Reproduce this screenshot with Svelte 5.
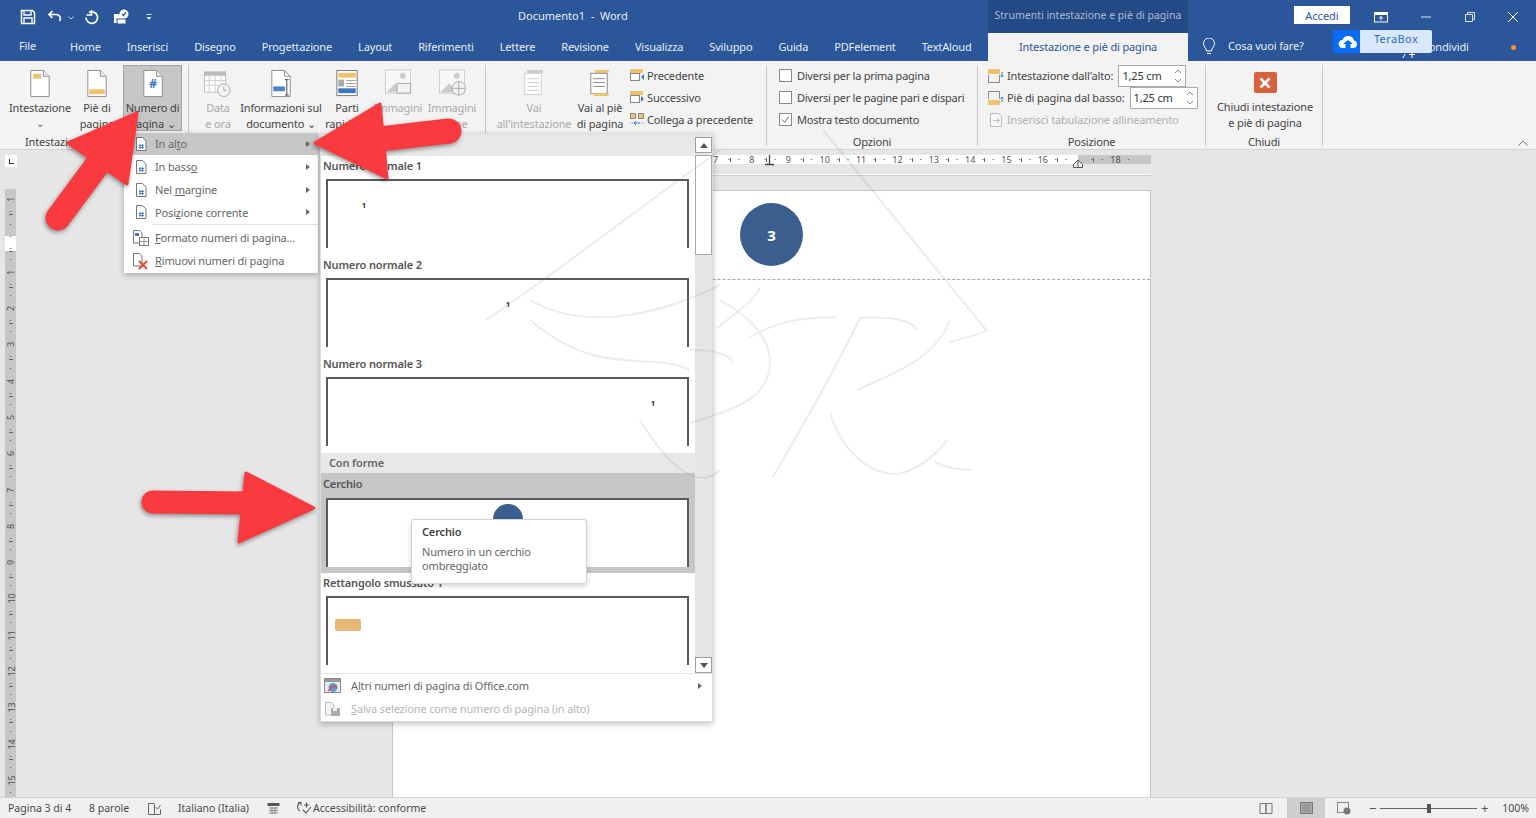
<script>
  const tabs = ['Home', 'Inserisci', 'Disegno', 'Progettazione', 'Layout', 'Riferimenti', 'Lettere', 'Revisione', 'Visualizza', 'Sviluppo', 'Guida', 'PDFelement', 'TextAloud'];

  const menu = [
    { pre: 'In al', key: 't', post: 'o', arrow: true, hot: true },
    { pre: 'In bass', key: 'o', post: '', arrow: true },
    { pre: 'Nel ', key: 'm', post: 'argine', arrow: true },
    { pre: 'Posi', key: 'z', post: 'ione corrente', arrow: true, sep: true },
    { pre: '', key: 'F', post: 'ormato numeri di pagina...', icon: 'format' },
    { pre: '', key: 'R', post: 'imuovi numeri di pagina', icon: 'remove' }
  ];

  const hCells = [7, 8, 9, 10, 11, 12, 13, 14, 15, 16, 17, 18];
  const vCells = [1, 0, 1, 2, 3, 4, 5, 6, 7, 8, 9, 10, 11, 12, 13, 14, 15];

  const normali = [
    { nome: 'Numero normale 1', pos: 'left' },
    { nome: 'Numero normale 2', pos: 'mid' },
    { nome: 'Numero normale 3', pos: 'right' }
  ];
</script>

{#snippet doc(band, num)}
  <svg class="ic-big" viewBox="0 0 24 30" width="24" height="30">
    <path d="M2.500 1.500h13l6 6v21h-19z" fill="#fff" stroke="#8c8c8c" />
    <path d="M15.500 1.500v6h6" fill="#f3f3f3" stroke="#8c8c8c" />
    {#if band === 'top'}<rect x="5" y="5" width="8" height="5" fill="#eec36f" />{/if}
    {#if band === 'bottom'}<rect x="4" y="21" width="16" height="5" fill="#eec36f" />{/if}
    {#if num}<text x="12" y="20" text-anchor="middle" class="hash">#</text>{/if}
  </svg>
{/snippet}

{#snippet miniDoc()}
  <svg viewBox="0 0 14 16" width="14" height="16">
    <path d="M2.500 1.500h6l3.500 3.500v9.500h-9.500z" fill="#fff" stroke="#777" />
    <path d="M5 9.500h5M5 11.500h5M6 8v5M8.500 8v5" stroke="#3b78c2" fill="none" stroke-width=".9" />
  </svg>
{/snippet}

{#snippet check(on)}
  <span class="chk">
    {#if on}
      <svg viewBox="0 0 12 12" width="12" height="12"><path d="M2.500 6l2.500 3 4.500-6" fill="none" stroke="#555" /></svg>
    {/if}
  </span>
{/snippet}

{#snippet spin()}
  <span class="spin">
    <svg viewBox="0 0 8 16" width="8" height="16"><path d="M1 5l3-3 3 3M1 11l3 3 3-3" fill="none" stroke="#888" /></svg>
  </span>
{/snippet}

<div class="app">
  <header class="titlebar">
    <div class="qat">
      <svg viewBox="0 0 16 16" width="16" height="16"><path d="M1.500 1.500h11l2 2v11h-13z" fill="none" stroke="#fff" stroke-width="1.500" /><path d="M4 2v4h7V2M4 14V9h8v5" fill="none" stroke="#fff" stroke-width="1.300" /></svg>
      <svg viewBox="0 0 16 16" width="16" height="16"><path d="M5.500 2L2 5.500 5.500 9M2.500 5.500h7a4 4 0 0 1 3 6.500" fill="none" stroke="#fff" stroke-width="1.700" /></svg>
      <svg class="chev" viewBox="0 0 6 4" width="6" height="4"><path d="M.5.500L3 3l2.500-2.500" fill="none" stroke="#cdd8e8" /></svg>
      <svg class="redo" viewBox="0 0 16 16" width="16" height="16"><path d="M5 3.500a5.800 5.800 0 1 1-3 5M7.500 1v5h-5" fill="none" stroke="#fff" stroke-width="1.700" /></svg>
      <svg class="touch" viewBox="0 0 18 16" width="18" height="16"><rect x="2" y="5" width="9" height="9" fill="#fff" /><rect x="5" y="10" width="9" height="5" fill="#fff" stroke="#2b579a" /><circle cx="12" cy="5" r="4.500" fill="#fff" /><path d="M10 5l1.500 1.500L14 3.500" stroke="#2b579a" fill="none" stroke-width="1.200" /></svg>
      <svg class="custom" viewBox="0 0 8 8" width="8" height="8"><path d="M1.500 1.500h5" stroke="#dfe6f0" /><path d="M1.500 4h5L4 7z" fill="#dfe6f0" /></svg>
    </div>
    <div class="doc-title">Documento1&nbsp; -&nbsp; Word</div>
    <div class="ctx-title">Strumenti intestazione e piè di pagina</div>
    <div class="win">
      <button class="accedi">Accedi</button>
      <svg class="w-ribbon" viewBox="0 0 14 12" width="14" height="12"><rect x=".5" y="1.500" width="13" height="9.500" fill="none" stroke="#fff" /><path d="M1 2h12v2H1z" fill="#fff" /><path d="M7 9.500V5.500M5 7.500l2-2 2 2" stroke="#fff" fill="none" /></svg>
      <svg class="w-min" viewBox="0 0 10 2" width="10" height="2"><path d="M0 1h10" stroke="#dfe6f0" /></svg>
      <svg class="w-max" viewBox="0 0 10 10" width="10" height="10"><path d="M.5 2.500h7v7h-7zM2.500 2.500v-2h7v7h-2" fill="none" stroke="#dfe6f0" /></svg>
      <svg class="w-close" viewBox="0 0 10 10" width="10" height="10"><path d="M0 0l10 10M10 0L0 10" stroke="#fff" /></svg>
    </div>
  </header>

  <nav class="tabbar">
    <div class="tabs">
      <span class="tab-file">File</span>
      {#each tabs as t}
        <span class="tab">{t}</span>
      {/each}
    </div>
    <div class="tab-active">Intestazione e piè di pagina</div>
    <div class="tab-right">
      <svg class="bulb" viewBox="0 0 14 18" width="14" height="18"><path d="M4.500 13c0-3-3-4-3-7.500a5.500 5.500 0 0 1 11 0c0 3.500-3 4.500-3 7.500zM5 15.500h4" fill="none" stroke="#fff" /></svg>
      <span class="cosa">Cosa vuoi fare?</span>
      <svg class="person" viewBox="0 0 14 8" width="14" height="8"><path d="M1 8l2-4M10 1v7M7 4.500h6" stroke="#fff" fill="none" /></svg>
      <span class="cond">Condividi</span>
      <span class="dot"></span>
    </div>
  </nav>

  <section class="ribbon">
    <div class="group" style="width:189px">
      <div class="g-body g1">
        <div class="big w70">{@render doc('top')}<span>Intestazione</span><i class="c">⌄</i></div>
        <div class="big w44">{@render doc('bottom')}<span>Piè di<br />pagina</span></div>
        <div class="big w59 on">{@render doc('', true)}<span>Numero di<br />pagina ⌄</span></div>
      </div>
      <div class="g-label">Intestazione e piè di pagina</div>
    </div>

    <div class="group" style="width:297px">
      <div class="g-body g2">
        <div class="big w40 off">
          <svg class="ic-big" viewBox="0 0 30 30" width="30" height="30"><rect x="1" y="3" width="22" height="21" fill="#fff" stroke="#bbb" /><rect x="1" y="3" width="22" height="4" fill="#bbb" /><path d="M1 12h22M1 17h22M6 7v17M12 7v17M18 7v17" stroke="#ccc" /><circle cx="21" cy="22" r="6.500" fill="#f3f3f3" stroke="#aaa" /><path d="M21 18v4h3" stroke="#aaa" fill="none" /></svg>
          <span>Data<br />e ora</span>
        </div>
        <div class="big w86">
          <svg class="ic-big" viewBox="0 0 24 30" width="24" height="30"><path d="M2.500 1.500h13l6 6v21h-19z" fill="#fff" stroke="#8c8c8c" /><path d="M15.500 1.500v6h6" fill="none" stroke="#8c8c8c" /><rect x="4" y="18" width="12" height="5" fill="#4a86c8" /><path d="M18 11v16M16 11h4M16 27h4" stroke="#444" fill="none" /></svg>
          <span>Informazioni sul<br />documento ⌄</span>
        </div>
        <div class="big w46">
          <svg class="ic-big" viewBox="0 0 24 30" width="24" height="30"><rect x="1.500" y="1.500" width="21" height="26" fill="#fff" stroke="#777" /><rect x="3" y="4" width="18" height="5" fill="#eec36f" /><rect x="3" y="11" width="6" height="7" fill="#aaa" /><path d="M11 12h10M11 15h10M11 18h10" stroke="#999" /><rect x="3" y="20" width="18" height="5" fill="#3b78c2" /></svg>
          <span>Parti<br />rapide ⌄</span>
        </div>
        <div class="big w56 off">
          <svg class="ic-big" viewBox="0 0 30 30" width="30" height="30"><rect x="2" y="1" width="26" height="24" fill="#f7f7f7" stroke="#ccc" /><circle cx="20" cy="7" r="3" fill="#ccc" /><path d="M3 24l9-9 9 9z" fill="#ccc" /><rect x="14" y="15" width="14" height="10" fill="#f3f3f3" stroke="#aaa" /></svg>
          <span>Immagini<br />&nbsp;</span>
        </div>
        <div class="big w52 off">
          <svg class="ic-big" viewBox="0 0 30 30" width="30" height="30"><rect x="2" y="1" width="26" height="24" fill="#f7f7f7" stroke="#ccc" /><circle cx="20" cy="7" r="3" fill="#ccc" /><path d="M3 24l9-9 9 9z" fill="#ccc" /><circle cx="22" cy="20" r="7" fill="#f3f3f3" stroke="#aaa" /><path d="M15 20h14M22 13v14" stroke="#aaa" /></svg>
          <span>Immagini<br />online</span>
        </div>
      </div>
      <div class="g-label"></div>
    </div>

    <div class="group" style="width:281px">
      <div class="g-body g3">
        <div class="big w76 off">
          <svg class="ic-big" viewBox="0 0 24 30" width="24" height="30"><rect x="5" y="1" width="16" height="3" fill="#ccc" /><rect x="2.500" y="4.500" width="17" height="22" fill="#fff" stroke="#ccc" /><path d="M5 10h12M5 14h12M5 18h12M5 22h12" stroke="#ccc" /></svg>
          <span>Vai<br />all'intestazione</span>
        </div>
        <div class="big w56">
          <svg class="ic-big" viewBox="0 0 24 30" width="24" height="30"><rect x="7" y="1" width="14" height="3" fill="#eec36f" /><rect x="2.500" y="4.500" width="17" height="21" fill="#fff" stroke="#888" /><path d="M5 10h12M5 14h12M5 18h12" stroke="#888" /><rect x="5" y="25" width="16" height="3" fill="#eec36f" /></svg>
          <span>Vai al piè<br />di pagina</span>
        </div>
        <div class="small-col">
          <div class="small">
            <svg viewBox="0 0 16 14" width="16" height="14"><rect x="1" y="1" width="13" height="4" fill="#eec36f" /><rect x="1.500" y="5.500" width="9" height="7" fill="#fff" stroke="#888" /><path d="M15 6l-3 3 3 3z" fill="#3b78c2" /></svg>
            <span>Precedente</span>
          </div>
          <div class="small">
            <svg viewBox="0 0 16 14" width="16" height="14"><rect x="1" y="1" width="13" height="4" fill="#eec36f" /><rect x="1.500" y="5.500" width="9" height="7" fill="#fff" stroke="#888" /><path d="M12 6l3 3-3 3z" fill="#3b78c2" /></svg>
            <span>Successivo</span>
          </div>
          <div class="small">
            <svg viewBox="0 0 16 14" width="16" height="14"><rect x="1.500" y="1.500" width="5" height="5" fill="#eec36f" stroke="#888" /><rect x="9.500" y="1.500" width="5" height="5" fill="#eec36f" stroke="#888" /><path d="M1 11h3M12 11h3" stroke="#888" stroke-dasharray="1 1" /><path d="M5 11h6M7 9l-2 2 2 2" stroke="#3b78c2" fill="none" /></svg>
            <span>Collega a precedente</span>
          </div>
        </div>
      </div>
      <div class="g-label"></div>
    </div>

    <div class="group" style="width:211px">
      <div class="g-body g4">
        <div class="small">{@render check(false)}<span>Diversi per la prima pagina</span></div>
        <div class="small">{@render check(false)}<span>Diversi per le pagine pari e dispari</span></div>
        <div class="small">{@render check(true)}<span>Mostra testo documento</span></div>
      </div>
      <div class="g-label">Opzioni</div>
    </div>

    <div class="group" style="width:228px">
      <div class="g-body g5">
        <div class="pos">
          <svg viewBox="0 0 16 16" width="16" height="16"><rect x="0" y="1" width="12" height="5" fill="#eec36f" /><path d="M.5 7v7.500h11V7" fill="none" stroke="#888" /><path d="M14 4v5M12.500 7.500L14 9l1.500-1.500" fill="none" stroke="#3b78c2" /></svg>
          <span>Intestazione dall'alto:</span>
          <div class="field"><em>1,25 cm</em>{@render spin()}</div>
        </div>
        <div class="pos">
          <svg viewBox="0 0 16 16" width="16" height="16"><path d="M.5 9V1.500h11V9" fill="none" stroke="#888" /><rect x="0" y="10" width="12" height="5" fill="#eec36f" /><path d="M14 12V7M12.500 8.500L14 7l1.500 1.500" fill="none" stroke="#3b78c2" /></svg>
          <span>Piè di pagina dal basso:</span>
          <div class="field"><em>1,25 cm</em>{@render spin()}</div>
        </div>
        <div class="pos dis">
          <svg viewBox="0 0 16 16" width="16" height="16"><path d="M2.500 1.500h8l3 3v10h-11z" fill="#f8f8f8" stroke="#bbb" /><path d="M5 8.500h6M9 6l2.500 2.500L9 11" stroke="#bbb" fill="none" /></svg>
          <span>Inserisci tabulazione allineamento</span>
        </div>
      </div>
      <div class="g-label">Posizione</div>
    </div>

    <div class="group" style="width:117px">
      <div class="g-body g6">
        <div class="big w117">
          <span class="close-ic">
            <svg viewBox="0 0 12 12" width="12" height="12"><path d="M1.500 1.500l9 9M10.500 1.500l-9 9" stroke="#fff" stroke-width="2.600" /></svg>
          </span>
          <span>Chiudi intestazione<br />e piè di pagina</span>
        </div>
      </div>
      <div class="g-label">Chiudi</div>
    </div>

    <svg class="collapse" viewBox="0 0 10 6" width="10" height="6"><path d="M.5 5.500L5 1l4.500 4.500" fill="none" stroke="#777" /></svg>
  </section>

  <main class="workspace">
    <div class="left-col">
      <div class="tab-sel"><span></span></div>
      <div class="vruler">
        <div class="v-white"></div>
        <div class="v-cells">
          {#each vCells as n, i}
            <div class="v-cell">
              <b class="tk"></b><i>·</i>
              {#if i !== 1}<span>{n}</span>{:else}<i>·</i>{/if}
              <i>·</i>
            </div>
          {/each}
        </div>
      </div>
    </div>
    <div class="page-col">
      <div class="hruler">
        <div class="h-cells">
          {#each hCells as n}
            <div class="h-cell">
              <b class="tk"></b><i>·</i>
              {#if n !== 17}<span>{n}</span>{:else}<span>&nbsp;</span>{/if}
              <i>·</i>
            </div>
          {/each}
        </div>
        <svg class="tab-stop" viewBox="0 0 9 12" width="9" height="12"><path d="M4.500 1v9M0 10.500h9" stroke="#444" fill="none" stroke-width="1.300" /></svg>
        <svg class="margin-stop" viewBox="0 0 10 9" width="10" height="9"><path d="M.5 8.500v-3L5 1l4.500 4.500v3z" fill="#f3f3f3" stroke="#555" /><path d="M5 1v7.500" stroke="#555" /></svg>
      </div>
      <div class="h-line"></div>
      <div class="page">
        <div class="page-header">
          <div class="bubble">3</div>
        </div>
      </div>
    </div>
    <div class="right-col"></div>
  </main>

  <footer class="status">
    <span class="st w81">Pagina 3 di 4</span>
    <span class="st w58">8 parole</span>
    <svg class="st-book" viewBox="0 0 15 13" width="15" height="13"><path d="M7.500 2.500v10h-6v-11h6M7.500 2.500v10h6v-5M8.500 5l2 2 3-4" fill="none" stroke="#666" /></svg>
    <span class="st lang">Italiano (Italia)</span>
    <svg class="st-cal" viewBox="0 0 13 13" width="13" height="13"><rect x=".5" y="1" width="12" height="3" fill="#555" /><path d="M2 6h9M2 8.500h9M2 11h9M5 5v7M8 5v7" stroke="#888" /></svg>
    <svg class="st-acc" viewBox="0 0 17 14" width="17" height="14"><path d="M5 1a5 5 0 0 0-1 9M2 1.500h3v3M13 4h-5M10.500 1.500v5M7 9l3 3 5-6" fill="none" stroke="#555" stroke-width="1.100" /></svg>
    <span class="st">Accessibilità: conforme</span>
    <div class="st-right">
      <svg viewBox="0 0 14 12" width="14" height="12"><path d="M7 2v9.500H1V1.500h6M7 2v9.500h6V1.500H7" fill="#eee" stroke="#777" /></svg>
      <span class="view-on"><svg viewBox="0 0 13 12" width="13" height="12"><rect x=".5" y=".5" width="12" height="11" fill="#aaa" stroke="#777" /><path d="M2 3h9M2 5h9M2 7h9M2 9h9" stroke="#888" /></svg></span>
      <svg class="web" viewBox="0 0 14 13" width="14" height="13"><rect x=".5" y=".5" width="11" height="10" fill="#eee" stroke="#888" /><circle cx="10" cy="9" r="3.500" fill="#777" /></svg>
      <span class="z-btn minus">−</span>
      <div class="slider"><span class="thumb"></span></div>
      <span class="z-btn plus">+</span>
      <span class="zoom">100%</span>
    </div>
  </footer>

  <!-- menu numero di pagina -->
  <div class="menu">
    {#each menu as m}
      <div class="m-item" class:hot={m.hot} class:sep={m.sep}>
        <span class="m-ic">
          {#if m.icon === 'format'}
            <svg viewBox="0 0 18 18" width="18" height="18"><path d="M1.500 1.500h6l2.500 2.500v10H1.500z" fill="#fff" stroke="#777" /><rect x="3" y="4" width="4" height="3" fill="#3b78c2" /><rect x="7.500" y="8.500" width="9" height="8" fill="#fff" stroke="#777" /><path d="M7.500 12.500h9M12 8.500v8" stroke="#999" /></svg>
          {:else if m.icon === 'remove'}
            <svg viewBox="0 0 18 18" width="18" height="18"><path d="M1.500 1.500h6l2.500 2.500v10H1.500z" fill="#fff" stroke="#777" /><path d="M7 9l8 8M15 9l-8 8" stroke="#e04a3a" stroke-width="2" /></svg>
          {:else}
            {@render miniDoc()}
          {/if}
        </span>
        <span class="m-txt">{m.pre}<u>{m.key}</u>{m.post}</span>
        {#if m.arrow}<span class="m-arr"></span>{/if}
      </div>
    {/each}
  </div>

  <!-- galleria -->
  <div class="gallery">
    <div class="g-main">
      <div class="g-list">
        <div class="sect first">Semplice</div>
        {#each normali as it}
          <div class="g-item">
            <div class="g-name">{it.nome}</div>
            <div class="g-prev {it.pos}"><span class="n1">1</span></div>
          </div>
        {/each}
        <div class="sect">Con forme</div>
        <div class="g-item hot">
          <div class="g-name">Cerchio</div>
          <div class="g-prev center"><span class="mini-circle"></span></div>
        </div>
        <div class="g-item">
          <div class="g-name">Rettangolo smussato 1</div>
          <div class="g-prev start"><span class="mini-rect"></span></div>
        </div>
      </div>
      <div class="scroll">
        <div class="s-btn"><span class="up"></span></div>
        <div class="s-thumb"></div>
        <div class="s-space"></div>
        <div class="s-btn"><span class="down"></span></div>
      </div>
    </div>
    <div class="g-foot">
      <div class="f-item">
        <svg viewBox="0 0 18 16" width="18" height="16"><rect x=".5" y=".5" width="16" height="14" fill="#eee" stroke="#888" /><rect x="1" y="1" width="15" height="3" fill="#999" /><circle cx="9" cy="9.500" r="4.500" fill="#5b9bd5" /><path d="M4 13l5-5 4 1" stroke="#e04a3a" fill="none" stroke-width="1.500" /></svg>
        <span>A<u>l</u>tri numeri di pagina di Office.com</span>
        <span class="m-arr"></span>
      </div>
      <div class="f-item dis">
        <svg viewBox="0 0 18 16" width="18" height="16"><path d="M1.500 1.500h6l2.500 2.500v10H1.500z" fill="#f5f5f5" stroke="#bbb" /><rect x="7" y="7" width="9" height="8" fill="#aaa" /><rect x="9" y="7" width="4" height="3" fill="#eee" /></svg>
        <span><u>S</u>alva selezione come numero di pagina (in alto)</span>
      </div>
    </div>
  </div>

  <div class="tip">
    <div class="tip-title">Cerchio</div>
    <div class="tip-desc">Numero in un cerchio<br />ombreggiato</div>
  </div>

  <div class="terabox">
    <svg viewBox="0 0 20 16" width="20" height="16"><path d="M5 14a4 4 0 0 1-.5-8A6 6 0 0 1 16 6.500a3.800 3.800 0 0 1-1 7.500h-2.500v-4H15l-5-4-5 4h2.500v4z" fill="#fff" /></svg>
    <span>TeraBox</span>
  </div>

  <!-- filigrana -->
  <svg class="watermark" viewBox="0 0 1536 818">
    <g fill="none" stroke="#777" stroke-width="2">
      <path d="M823 130L987 331" />
      <path d="M486 320C560 270 650 200 720 150" />
      <path d="M750 337C780 320 800 318 837 317" />
      <path d="M860 318C890 316 912 320 917 330" />
      <path d="M860 318C830 380 800 430 773 477" />
      <path d="M857 390C890 375 935 360 950 320" />
      <path d="M950 342C965 338 978 335 987 330" />
      <path d="M690 423C730 410 770 400 770 363C770 340 755 320 720 300" />
      <path d="M690 350C715 350 730 355 733 363" />
      <path d="M717 328C740 310 755 300 760 287" />
      <path d="M830 413C845 460 880 480 905 472C925 465 940 450 947 440" />
      <path d="M530 300C590 335 670 310 720 285" />
      <path d="M530 320C600 380 650 350 690 370" />
      <path d="M640 420C670 470 700 490 720 470" />
      <path d="M935 462C950 470 965 470 972 470" />
    </g>
  </svg>

  <!-- frecce -->
  <svg class="arrows" viewBox="0 0 1536 818">
    <g fill="#f93a3e" stroke="#f93a3e" stroke-linejoin="round" stroke-linecap="round">
      <path d="M137 113L68 143L127 184z" stroke-width="3" />
      <path d="M98 164L58 218" stroke-width="25" fill="none" />
      <path d="M315 143L380 104L387 178z" stroke-width="3" />
      <path d="M380 139L449 131" stroke-width="25" fill="none" />
      <path d="M314 508L246 473L239 542z" stroke-width="3" />
      <path d="M245 503L153 502" stroke-width="23" fill="none" />
    </g>
  </svg>
</div>

<style>
  :global(body) {
    margin: 0;
    background: #e6e6e6;
  }

  .app {
    position: relative;
    width: 1536px;
    height: 818px;
    overflow: hidden;
    display: flex;
    flex-direction: column;
    font-family: "Noto Sans", "Open Sans", sans-serif;
    font-size: 11px;
    letter-spacing: -.15px;
    color: #444;
  }

  svg { display: block; flex: none; }
  .hash { font-size: 13px; font-weight: 700; fill: #3b78c2; }

  /* barra titolo */
  .titlebar {
    height: 33px;
    flex: none;
    background: #2b579a;
    color: #e6ecf5;
    display: grid;
    grid-template-columns: 518px 470px 200px 1fr;
    align-items: center;
  }
  .qat { display: flex; align-items: center; padding-left: 20px; }
  .qat .chev { margin: 2px 0 0 5px; }
  .qat svg:nth-child(2) { margin-left: 11px; }
  .qat .redo { margin-left: 10px; }
  .qat .touch { margin-left: 12px; }
  .qat .custom { margin-left: 15px; }
  .doc-title { font-size: 11px; margin-top: -2px; letter-spacing: 0; }
  .ctx-title {
    background: #234a84;
    height: 33px;
    line-height: 31px;
    color: #a8bad3;
    font-size: 10.500px;
    letter-spacing: 0;
    text-align: center;
    white-space: nowrap;
  }
  .win { display: flex; align-items: center; padding-left: 106px; }
  .accedi {
    width: 56px;
    height: 18px;
    background: #fff;
    border: 0;
    padding: 0;
    color: #2b579a;
    font: inherit;
    margin-top: -3px;
  }
  .w-ribbon { margin-left: 24px; }
  .w-min { margin-left: 33px; }
  .w-max { margin-left: 34px; }
  .w-close { margin-left: 33px; }

  /* schede */
  .tabbar {
    height: 28px;
    flex: none;
    background: #2b579a;
    color: #e6ecf5;
    display: grid;
    grid-template-columns: 988px 200px 1fr;
  }
  .tabs { display: flex; align-items: center; padding-left: 19px; white-space: nowrap; font-size: 11px; min-width: 0; }
  .tab-file { width: 51px; flex: none; margin-top: -3px; }
  .tab { padding-right: 26px; flex: none; margin-top: -2px; }
  .tab-active {
    background: #f3f3f3;
    color: #2b579a;
    text-align: center;
    line-height: 28px;
    font-size: 11px;
  }
  .tab-right { position: relative; display: flex; align-items: center; font-size: 11px; }
  .bulb { margin-left: 14px; }
  .cosa { margin-left: 12px; margin-top: -3px; }
  .person { position: absolute; left: 214px; top: 17px; }
  .cond { position: absolute; left: 234px; top: 6px; }
  .dot {
    position: absolute;
    left: 323px;
    top: 12px;
    width: 5px;
    height: 5px;
    border-radius: 50%;
    background: #f0932b;
  }

  /* barra multifunzione */
  .ribbon {
    position: relative;
    height: 89px;
    flex: none;
    box-sizing: border-box;
    padding-top: 4px;
    background: #f3f3f3;
    border-bottom: 1px solid #d4d4d4;
    display: flex;
    align-items: flex-start;
  }
  .group {
    position: relative;
    height: 81px;
    box-sizing: border-box;
    border-right: 1px solid #c8c8c8;
    display: flex;
    flex-direction: column;
  }
  .g-body { flex: 1; display: flex; min-height: 0; }
  .g-label { height: 14px; line-height: 20px; text-align: center; white-space: nowrap; }
  .g1 { padding-left: 5px; }
  .g2 { padding-left: 9px; }
  .g3 { padding-left: 10px; }
  .g4 { flex-direction: column; padding: 0 0 0 12px; margin-top: -1px; letter-spacing: -.25px; }
  .g5 { flex-direction: column; padding-left: 10px; }

  .big {
    height: 66px;
    box-sizing: border-box;
    display: flex;
    flex-direction: column;
    align-items: center;
    text-align: center;
    line-height: 16px;
    white-space: nowrap;
    flex: none;
  }
  .big .ic-big { height: 29px; margin-top: 4px; margin-bottom: 2px; }
  .big > span:not(.close-ic) { display: block; }
  .big .c { font-style: normal; font-size: 10px; line-height: 14px; color: #666; }
  .big.off { color: #a9a9a9; }
  .big.on { background: #c6c6c6; outline: 1px solid #a5a5a5; outline-offset: -1px; }
  .w40 { width: 40px; }
  .w44 { width: 44px; margin-right: 4px; }
  .w46 { width: 46px; }
  .w52 { width: 52px; }
  .w56 { width: 56px; }
  .w59 { width: 59px; }
  .w70 { width: 70px; }
  .w76 { width: 76px; }
  .w86 { width: 86px; }
  .w117 { width: 118px; }

  .close-ic {
    width: 23px;
    height: 23px;
    margin: 7px 0 6px;
    border-radius: 2px;
    background: #d9603d;
    display: flex;
    align-items: center;
    justify-content: center;
  }

  .small-col { display: flex; flex-direction: column; margin-top: -1px; padding-left: 1px; }
  .small { height: 22px; display: flex; align-items: center; gap: 2px; white-space: nowrap; }
  .g4 .small { gap: 5px; }
  .chk {
    width: 11px;
    height: 11px;
    border: 1px solid #8a8a8a;
    background: #fff;
    display: block;
  }
  .chk svg { width: 11px; height: 11px; }

  .pos { height: 22px; display: flex; align-items: center; gap: 3px; white-space: nowrap; }
  .pos > span { margin-top: -2px; }
  .pos.dis { color: #b0b0b0; }
  .field {
    box-sizing: border-box;
    width: 68px;
    height: 22px;
    margin-left: 2px;
    padding: 0 0 2px 3px;
    background: #fff;
    border: 1px solid #ababab;
    display: flex;
    align-items: center;
    color: #333;
    position: relative;
  }
  .field em { font-style: normal; }
  .spin { position: absolute; right: 3px; top: 2px; }
  .collapse { position: absolute; right: 8px; top: 79px; }

  /* area documento */
  .workspace {
    flex: 1;
    display: flex;
    min-height: 0;
    background: #e6e6e6;
  }
  .left-col { width: 392px; flex: none; padding-left: 5px; box-sizing: border-box; }
  .tab-sel {
    width: 12px;
    height: 12px;
    margin-top: 5px;
    background: #fff;
    display: flex;
    align-items: center;
    justify-content: center;
  }
  .tab-sel span {
    width: 4px;
    height: 4px;
    border-left: 1.500px solid #333;
    border-bottom: 1.500px solid #333;
  }
  .vruler {
    position: relative;
    width: 11px;
    height: 608px;
    margin-top: 22px;
    background: #c6c6c6;
    overflow: hidden;
  }
  .v-white { position: absolute; top: 47px; left: 0; right: 0; height: 15px; background: #fff; }
  .v-cells { position: relative; margin-top: -11px; }
  .v-cell {
    height: 36.300px;
    display: flex;
    flex-direction: column;
    align-items: center;
    justify-content: space-between;
    font-size: 9px;
    color: #555;
  }
  .v-cell span { transform: rotate(-90deg); line-height: 9px; height: 9px; }
  .v-cell i { font-style: normal; line-height: 4px; height: 4px; }
  .v-cell .tk { width: 4px; height: 1px; background: #666; }

  .page-col { width: 759px; flex: none; display: flex; flex-direction: column; }
  .hruler {
    position: relative;
    height: 9px;
    margin-top: 5px;
    background: linear-gradient(to right, #c6c6c6 70px, #fff 70px, #fff 686px, #c6c6c6 686px);
  }
  .h-cells { display: flex; margin-left: 301.500px; width: 457.500px; overflow: hidden; }
  .h-cell {
    width: 36.350px;
    flex: none;
    height: 9px;
    display: flex;
    justify-content: space-between;
    align-items: center;
    font-size: 9px;
    line-height: 9px;
    letter-spacing: 0;
    color: #555;
  }
  .h-cell span { width: 10px; text-align: center; }
  .h-cell i { font-style: normal; }
  .h-cell .tk { width: 1px; height: 4px; background: #666; }
  .tab-stop { position: absolute; left: 373px; top: -1px; }
  .margin-stop { position: absolute; left: 681px; top: 4px; }
  .h-line { height: 0; margin-top: 10px; border-top: 1px solid #fafafa; border-bottom: 1px solid #ccc; }
  .page {
    flex: 1;
    margin-top: 14px;
    background: #fff;
    border: 1px solid #c6c6c6;
    border-bottom: 0;
  }
  .page-header {
    height: 89px;
    box-sizing: border-box;
    padding: 12px 0 0 347px;
    border-bottom: 1px dashed #aaa;
  }
  .bubble {
    width: 63px;
    height: 63px;
    border-radius: 50%;
    background: #3a5f8f;
    color: #fff;
    font-weight: 700;
    font-size: 15px;
    display: flex;
    align-items: center;
    justify-content: center;
  }
  .right-col { flex: 1; }

  /* stato */
  .status {
    height: 21px;
    flex: none;
    box-sizing: border-box;
    background: #f0f0f0;
    border-top: 1px solid #d4d4d4;
    display: flex;
    align-items: center;
    padding-left: 8px;
    font-size: 10.500px;
    letter-spacing: 0;
    color: #4a4a4a;
    white-space: nowrap;
  }
  .st { display: block; }
  .w81 { width: 81px; }
  .w58 { width: 58px; }
  .lang { margin-left: 16px; width: 89px; }
  .st-acc { margin: 0 0 0 16px; }
  .st-right { margin-left: auto; display: flex; align-items: center; height: 100%; }
  .view-on {
    width: 38px;
    height: 100%;
    margin-left: 14px;
    background: #cfcfcf;
    display: flex;
    align-items: center;
    justify-content: center;
  }
  .web { margin-left: 12px; }
  .z-btn { font-size: 13px; color: #555; width: 9px; text-align: center; }
  .minus { margin-left: 17px; }
  .slider { position: relative; width: 97px; height: 1px; margin: 0 3px; background: #666; }
  .thumb { position: absolute; left: 47px; top: -4px; width: 4px; height: 9px; background: #555; }
  .zoom { margin: 0 7px 0 13px; }

  /* menu a sinistra */
  .menu {
    position: absolute;
    left: 124px;
    top: 133px;
    width: 194px;
    height: 140px;
    box-sizing: border-box;
    background: #fff;
    box-shadow: 0 2px 6px rgba(0, 0, 0, .28);
    color: #666;
  }
  .m-item {
    height: 23px;
    display: flex;
    align-items: center;
    position: relative;
  }
  .m-item.hot { background: #c6c6c6; height: 22px; }
  .m-item.hot .m-txt { margin-top: -2px; }
  .m-item.sep { height: 22px; margin-bottom: 3px; }
  .m-item.sep::after {
    content: "";
    position: absolute;
    left: 28px;
    right: 0;
    bottom: -2px;
    border-top: 1px solid #e1e1e1;
  }
  .m-ic { width: 31px; display: flex; justify-content: center; flex: none; padding-left: 2px; box-sizing: border-box; }
  .m-txt { white-space: nowrap; }
  .m-arr {
    margin-left: auto;
    margin-right: 8px;
    width: 0;
    height: 0;
    border-left: 4px solid #666;
    border-top: 3.500px solid transparent;
    border-bottom: 3.500px solid transparent;
  }

  /* galleria */
  .gallery {
    position: absolute;
    left: 320px;
    top: 133px;
    width: 393px;
    height: 589px;
    box-sizing: border-box;
    background: #fff;
    border: 1px solid #dcdcdc;
    box-shadow: 0 2px 6px rgba(0, 0, 0, .25);
    display: flex;
    flex-direction: column;
  }
  .g-main { display: flex; height: 539px; flex: none; }
  .g-list { width: 374px; flex: none; overflow: hidden; }
  .sect {
    height: 20px;
    line-height: 20px;
    padding-left: 8px;
    background: #e8e8e8;
    font-weight: 600;
    color: #666;
  }
  .sect.first { height: 22px; }
  .g-item {
    height: 99px;
    box-sizing: border-box;
    padding: 2px 0 0 2px;
  }
  .g-item.hot { background: #c6c6c6; height: 100px; padding-top: 3px; }
  .g-item.hot .g-name { height: 22px; }
  .g-item.hot .g-prev { height: 69px; }
  .g-name {
    height: 21px;
    line-height: 16px;
    font-weight: 600;
    color: #555;
    white-space: nowrap;
  }
  .g-prev {
    box-sizing: border-box;
    width: 363px;
    height: 69px;
    margin-left: 3px;
    background: #fff;
    border: 2px solid #5a5a5a;
    border-bottom: 0;
    display: flex;
    padding: 20px 0 0 34px;
  }
  .g-prev.center { justify-content: center; padding: 0; }
  .g-prev.mid { padding-left: 178px; }
  .g-prev.right { padding-left: 323px; }
  .g-prev.start { padding: 21px 0 0 7px; }
  .n1 { font-size: 7px; line-height: 10px; font-weight: 700; color: #222; }
  .mini-circle {
    width: 30px;
    height: 30px;
    margin-top: 4px;
    border-radius: 50%;
    background: #3a5f8f;
  }
  .mini-rect {
    width: 26px;
    height: 12px;
    border-radius: 2px;
    background: #e5b877;
  }
  .scroll { flex: 1; background: #e6e6e6; display: flex; flex-direction: column; padding-top: 3px; }
  .s-btn {
    height: 16px;
    flex: none;
    box-sizing: border-box;
    background: #fff;
    border: 1px solid #9f9f9f;
    display: flex;
    align-items: center;
    justify-content: center;
  }
  .s-thumb {
    height: 100px;
    flex: none;
    box-sizing: border-box;
    margin-top: 2px;
    background: #fff;
    border: 1px solid #aaa;
  }
  .s-space { flex: 1; }
  .up, .down {
    width: 0;
    height: 0;
    border-left: 4.500px solid transparent;
    border-right: 4.500px solid transparent;
  }
  .up { border-bottom: 5px solid #555; }
  .down { border-top: 5px solid #555; }
  .g-foot { flex: 1; border-top: 1px solid #e4e4e4; color: #666; }
  .f-item { height: 23px; display: flex; align-items: center; gap: 9px; padding-left: 3px; white-space: nowrap; }
  .f-item .m-arr { margin-right: 10px; }
  .f-item.dis { color: #b5b5b5; }

  .tip {
    position: absolute;
    left: 411px;
    top: 519px;
    width: 176px;
    height: 65px;
    box-sizing: border-box;
    padding: 5px 10px;
    background: #fff;
    border: 1px solid #d4d4d4;
    border-radius: 3px;
    box-shadow: 0 2px 5px rgba(0, 0, 0, .18);
    color: #666;
    line-height: 14.500px;
  }
  .tip-title { color: #444; font-weight: 600; margin-bottom: 5px; }

  .terabox {
    position: absolute;
    left: 1333px;
    top: 30px;
    width: 99px;
    height: 23px;
    border-radius: 2px;
    overflow: hidden;
    background: #0a6cf5;
    display: flex;
    align-items: center;
    padding-left: 5px;
    box-sizing: border-box;
  }
  .terabox span {
    margin-left: 2px;
    flex: 1;
    align-self: stretch;
    background: #d9e8fd;
    color: #2b6bc0;
    text-align: center;
    line-height: 18px;
    letter-spacing: .4px;
  }

  .watermark, .arrows {
    position: absolute;
    left: 0;
    top: 0;
    width: 1536px;
    height: 818px;
    pointer-events: none;
  }
  .watermark { opacity: .13; filter: blur(.6px); }
  .arrows { filter: drop-shadow(-1px 2px 2px rgba(0, 0, 0, .4)); }
</style>
